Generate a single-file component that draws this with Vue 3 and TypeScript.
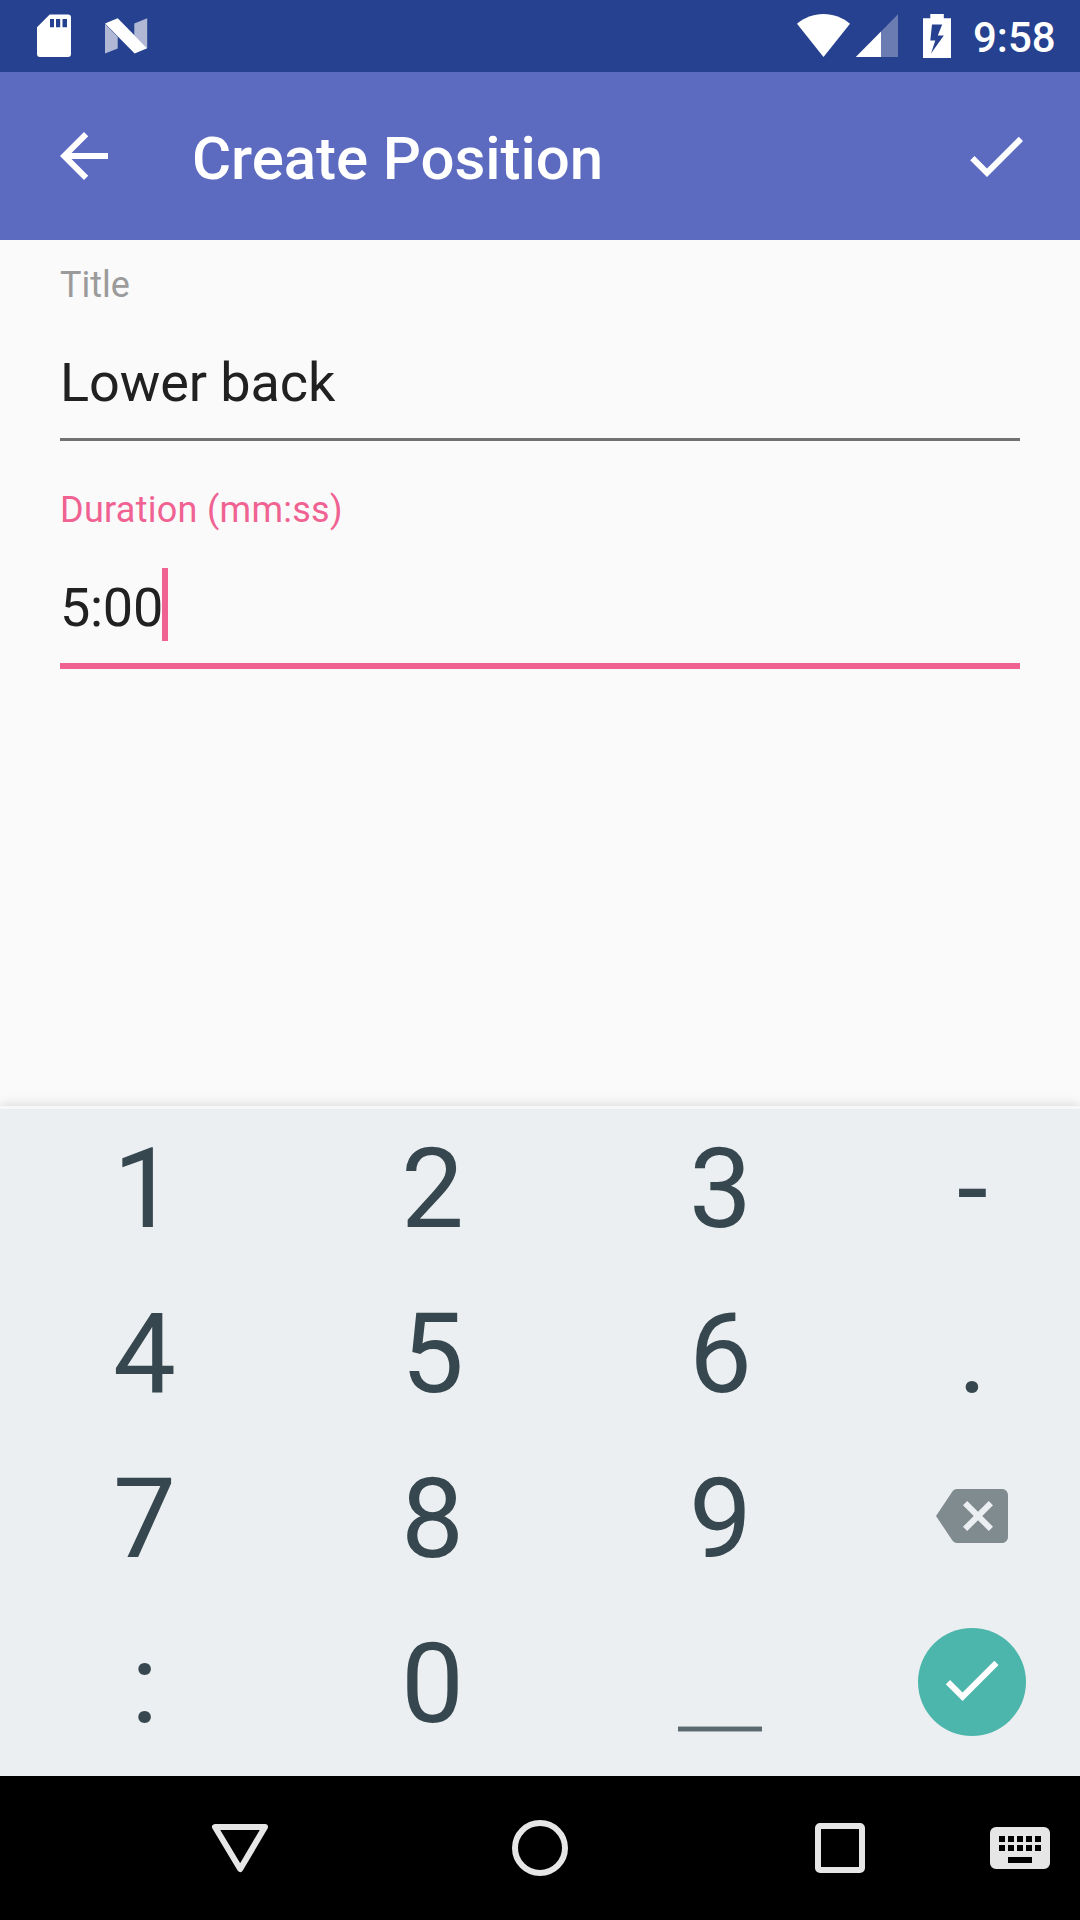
<script setup lang="ts">
interface Key {
  label: string
  kind: 'char' | 'space' | 'delete' | 'done'
}

const char = (label: string): Key => ({ label, kind: 'char' })

const keys: Key[] = [
  char('1'), char('2'), char('3'), char('-'),
  char('4'), char('5'), char('6'), char('.'),
  char('7'), char('8'), char('9'), { label: 'Delete', kind: 'delete' },
  char(':'), char('0'), { label: 'Space', kind: 'space' }, { label: 'Done', kind: 'done' },
]
</script>

<template>
  <div class="screen">
    <header class="status">
      <svg class="sd" width="34" height="72" viewBox="0 0 34 72">
        <path fill="#fff" fill-rule="evenodd" d="M12.7 14.6H31a3 3 0 0 1 3 3V54a3 3 0 0 1-3 3H3a3 3 0 0 1-3-3V27.3zM13 19v8.300h4V19zM19 19v8.300h4.200V19zM25.500 19v8.300h4.500V19z" />
      </svg>
      <svg class="nougat" width="43" height="72" viewBox="0 0 43 72">
        <path fill="#b0b8d6" d="M0 24l12.700 13v11.500L0 53.500zM29.300 23.500l12.900-5.200v30L29.300 35.500z" />
        <path fill="#fff" d="M0 23.600l12.700-5.300 29.500 30-12.500 5.200z" />
      </svg>
      <div class="grow"></div>
      <svg class="wifi" width="53" height="72" viewBox="0 0 53 72">
        <path fill="#fff" d="M0 23.800C7.500 17.500 16.500 14 26.500 14S45.500 17.500 53 23.800L26.500 57z" />
      </svg>
      <svg class="signal" width="43" height="72" viewBox="0 0 43 72">
        <path fill="#6b7cb2" d="M42 14.300V57H25V31.500z" />
        <path fill="#fff" d="M25 31.500V57H-.3z" />
      </svg>
      <svg class="battery" width="28" height="72" viewBox="0 0 28 72">
        <path fill="#fff" fill-rule="evenodd" d="M7.300 14h13.500v4.200H28V58H0V18.200h7.300zM9 24.500L7.300 40.500h5L8 53.500 20.800 35.500h-6L19.200 24.500z" />
      </svg>
      <span class="time">9:58</span>
    </header>

    <div class="appbar">
      <svg width="72" height="72" viewBox="0 0 24 24" fill="#fff">
        <path d="M20 11H7.830l5.590-5.590L12 4l-8 8 8 8 1.410-1.410L7.830 13H20z" />
      </svg>
      <h1 class="heading">Create Position</h1>
      <svg width="72" height="72" viewBox="0 0 24 24" fill="#fff">
        <path d="M9 16.170L4.830 12l-1.420 1.410L9 19 21 7l-1.410-1.410z" />
      </svg>
    </div>

    <main class="form">
      <div class="field">
        <div class="label">Title</div>
        <div class="value">Lower back</div>
      </div>
      <div class="field active">
        <div class="label">Duration (mm:ss)</div>
        <div class="value"><span class="typed">5:00<i class="caret"></i></span></div>
      </div>
    </main>

    <section class="keyboard">
      <div v-for="key in keys" :key="key.label" class="key">
        <span v-if="key.kind === 'char'" class="glyph">{{ key.label }}</span>
        <span v-else-if="key.kind === 'space'" class="space"></span>
        <svg v-else-if="key.kind === 'delete'" class="delete" width="72" height="72" viewBox="0 0 24 24" fill="#808b90">
          <path d="M22 3H7c-.69 0-1.230.35-1.590.88L0 12l5.410 8.110c.36.53.9.89 1.590.89h15c1.100 0 2-.9 2-2V5c0-1.100-.9-2-2-2zm-3 12.590L17.590 17 14 13.410 10.410 17 9 15.590 12.590 12 9 8.410 10.410 7 14 10.590 17.590 7 19 8.410 15.410 12 19 15.590z" />
        </svg>
        <span v-else class="done">
          <svg width="72" height="72" viewBox="0.150 0 24 24" fill="#fff">
            <path d="M9 16.170L4.830 12l-1.420 1.410L9 19 21 7l-1.410-1.410z" />
          </svg>
        </span>
      </div>
    </section>

    <nav class="nav">
      <div class="slot">
        <svg width="60" height="60" viewBox="0 0 60 60" fill="none" stroke="#e6e6e6" stroke-width="6" stroke-linejoin="round">
          <path d="M5 9h50L30.200 51z" />
        </svg>
      </div>
      <div class="slot">
        <svg width="60" height="60" viewBox="0 0 60 60" fill="none" stroke="#e6e6e6" stroke-width="6">
          <circle cx="30" cy="30" r="25" />
        </svg>
      </div>
      <div class="slot">
        <svg width="60" height="60" viewBox="0 0 60 60" fill="none" stroke="#e6e6e6" stroke-width="6">
          <rect x="8" y="8" width="44" height="44" rx="2" />
        </svg>
      </div>
      <svg width="60" height="72" viewBox="2 0 20 24" fill="#e6e6e6">
        <path fill-rule="evenodd" d="M4 5h16a2 2 0 0 1 2 2v10a2 2 0 0 1-2 2H4a2 2 0 0 1-2-2V7a2 2 0 0 1 2-2zM5 8v2h2V8zM8 8v2h2V8zM11 8v2h2V8zM14 8v2h2V8zM17 8v2h2V8zM5 11v2h2v-2zM8 11v2h2v-2zM11 11v2h2v-2zM14 11v2h2v-2zM17 11v2h2v-2zM8 15v2h8v-2z" />
      </svg>
    </nav>
  </div>
</template>

<style>
body {
  margin: 0;
}
</style>

<style scoped>
.screen {
  width: 1080px;
  height: 1920px;
  display: flex;
  flex-direction: column;
  background: #fafafa;
  font-family: Roboto, 'Liberation Sans', sans-serif;
  overflow: hidden;
}

svg {
  display: block;
  flex: none;
}

.status {
  height: 72px;
  flex: none;
  display: flex;
  align-items: center;
  padding: 0 24px 0 37px;
  background: #26418f;
}

.nougat {
  margin-left: 34px;
}

.grow {
  flex: 1;
}

.signal {
  margin-left: 6px;
}

.battery {
  margin-left: 24px;
}

.time {
  width: 83px;
  margin: 3px 0 0 22px;
  font-size: 42px;
  line-height: 49px;
  font-weight: 500;
  color: #fff;
  white-space: nowrap;
}

.appbar {
  height: 168px;
  flex: none;
  display: flex;
  align-items: center;
  padding: 0 48px;
  background: #5c6bc0;
}

.heading {
  flex: 1;
  margin: 5px 0 0 72px;
  font-size: 60px;
  line-height: 71px;
  letter-spacing: -0.08px;
  font-weight: 500;
  color: #fff;
}

.form {
  flex: 1;
  display: flex;
  flex-direction: column;
  gap: 48px;
  padding: 24px 60px 0;
}

.field {
  display: flex;
  flex-direction: column;
  gap: 45px;
  border-bottom: 3px solid #717171;
}

.label {
  font-size: 36px;
  line-height: 42px;
  color: #9b9b9b;
}

.value {
  padding-bottom: 24px;
  font-size: 54px;
  line-height: 63px;
  letter-spacing: -0.08px;
  color: #212121;
}

.field.active {
  border-bottom: 6px solid #f06292;
}

.active .label {
  letter-spacing: 0.28px;
  color: #f06292;
}

.active .value {
  letter-spacing: -0.3px;
}

.typed {
  position: relative;
}

.caret {
  position: absolute;
  left: 102px;
  top: -8px;
  width: 6px;
  height: 73px;
  background: #f06292;
}

.keyboard {
  height: 667px;
  flex: none;
  display: grid;
  grid-template-columns: 288px 288px 288px 216px;
  grid-template-rows: repeat(4, 165px);
  align-content: start;
  background: #ebeff1;
  border-top: 3px solid #f5f7f8;
  box-shadow: 0 -1px 11px rgba(0, 0, 0, 0.14);
}

.key {
  height: 156px;
  display: flex;
  align-items: center;
  justify-content: center;
}

.glyph {
  font-size: 112px;
  line-height: 131px;
  margin-top: 3px;
  padding-left: 1px;
  color: #37474f;
}

.space {
  width: 84px;
  height: 4px;
  margin-top: 94px;
  background: #5c6a70;
  border-top: 1px solid #a9b2b6;
  border-bottom: 1px solid #a9b2b6;
}

.delete {
  margin-bottom: 2px;
}

.done {
  width: 108px;
  height: 108px;
  display: flex;
  align-items: flex-start;
  justify-content: center;
  padding-top: 16px;
  box-sizing: border-box;
  border-radius: 50%;
  background: #4db6ac;
}

.nav {
  height: 144px;
  flex: none;
  display: flex;
  align-items: center;
  padding: 0 30px 0 90px;
  background: #000;
}

.slot {
  width: 300px;
  display: flex;
  justify-content: center;
}
</style>
